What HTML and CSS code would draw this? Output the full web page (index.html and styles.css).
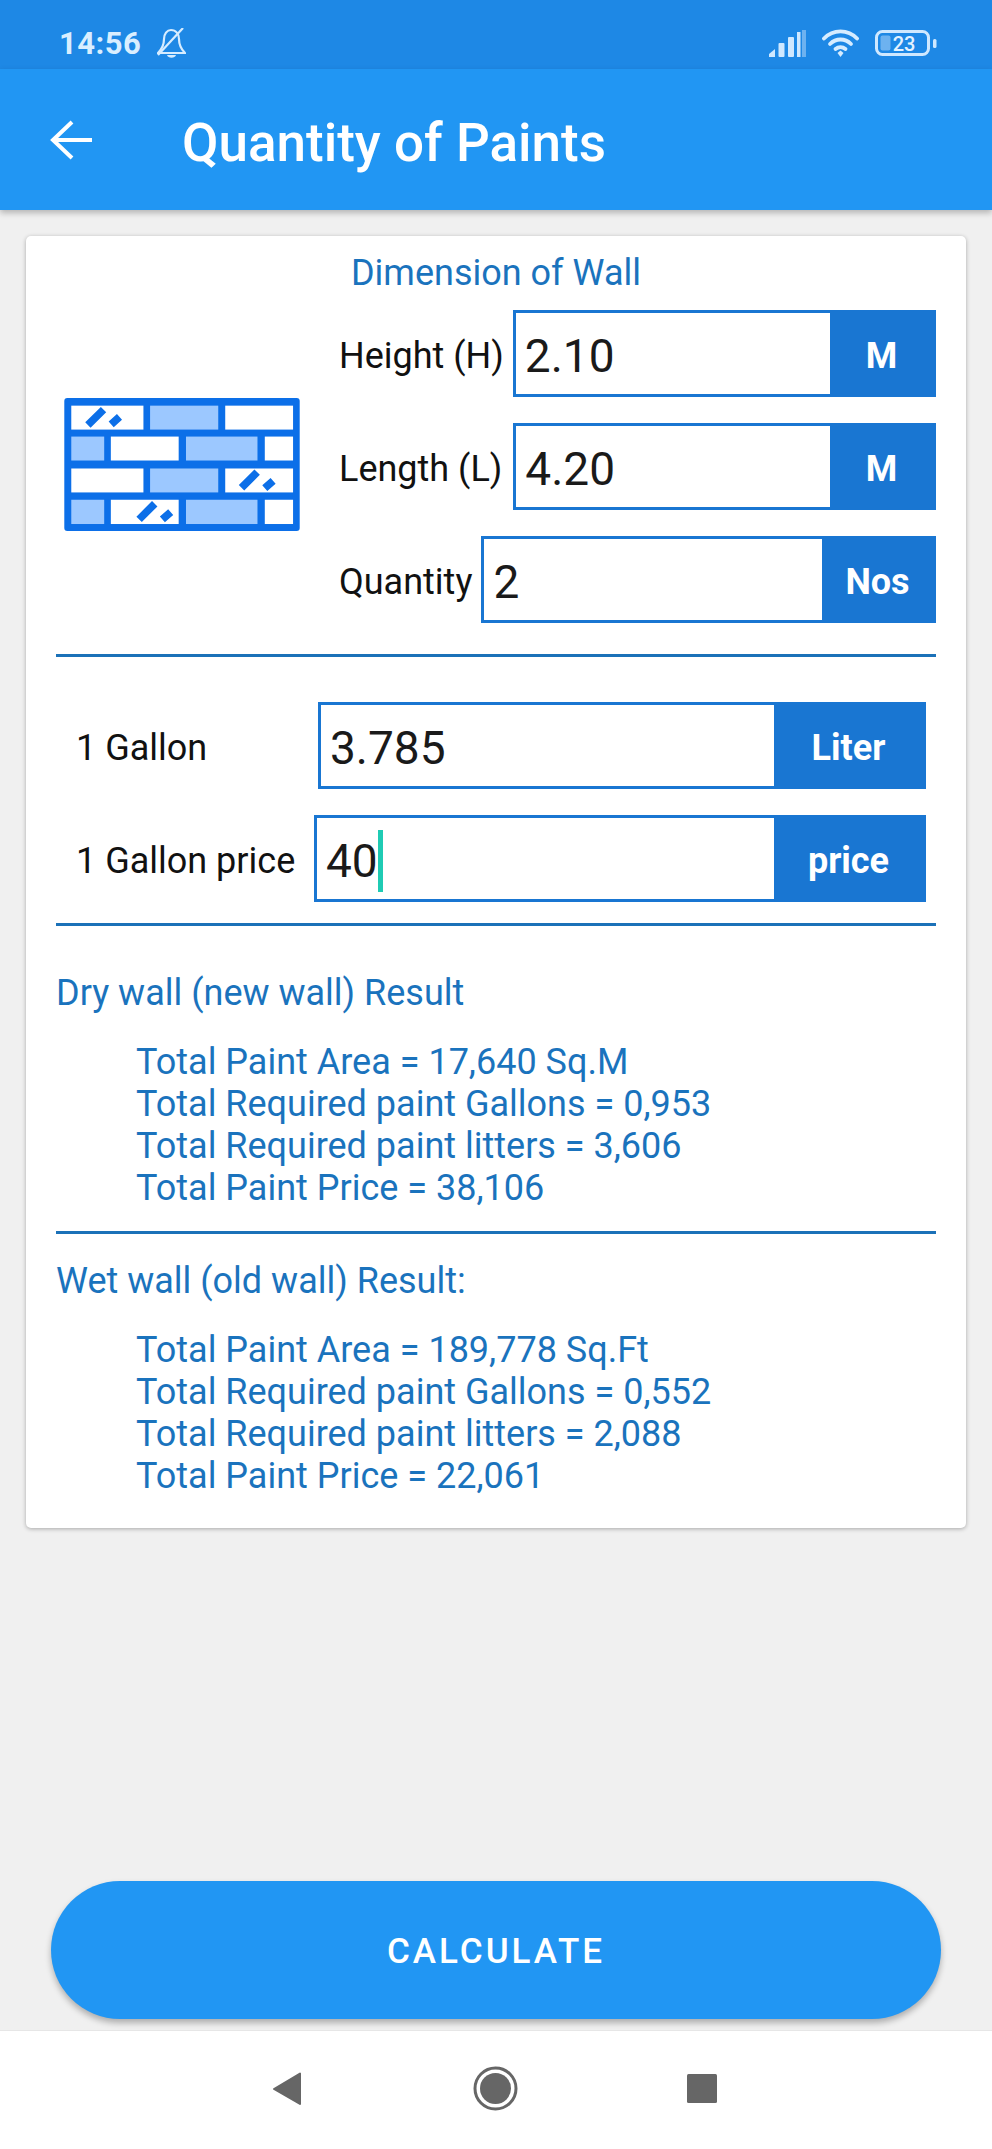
FILE: index.html
```html
<!DOCTYPE html>
<html lang="en">
<head>
<meta charset="utf-8">
<title>Quantity of Paints</title>
<link rel="stylesheet" href="styles.css">
</head>
<body>
<div class="screen">
  <header class="status">
    <div class="status-left">
      <span class="time">14:56</span>
      <svg class="bell" viewBox="0 0 29 30"><path d="M14 2c5 0 8 4 8 9 0 6 2 10 6 14H1c4-4 6-8 6-14 0-5 3-9 7-9z" fill="none" stroke="#d6ecff" stroke-width="2.200"/><path d="M1 27 26 0" stroke="#d6ecff" stroke-width="2.200"/><path d="M10 27h9c-1 3.500-8 3.500-9 0z" fill="#d6ecff"/></svg>
    </div>
    <div class="status-right">
      <svg class="signal" viewBox="0 0 38 27"><path d="M0 27v-3l6-5v8z" fill="#cfe8ff"/><rect x="9.500" y="13" width="6" height="14" rx="1" fill="#cfe8ff"/><rect x="19" y="7" width="6" height="20" rx="1" fill="#cfe8ff"/><rect x="28" y="2" width="3.500" height="25" fill="#cfe8ff"/><rect x="33" y="0" width="4" height="27" fill="#6db2f0"/></svg>
      <svg class="wifi" viewBox="0 0 37 28"><g fill="none" stroke="#d6ecff" stroke-width="3.800" stroke-linecap="round"><path d="M2 9.500c9-9.500 24-9.500 33 0"/><path d="M8 15c6-6 15-6 21 0"/><path d="M13.500 20c3-2.500 7-2.500 10 0"/></g><path d="M15.500 24l3-2.500 3 2.500-3 4z" fill="#d6ecff"/></svg>
      <svg class="battery" viewBox="0 0 62 26"><rect x="1.500" y="1.500" width="52" height="23" rx="6" fill="none" stroke="#cfe8ff" stroke-width="3"/><rect x="5.500" y="5.500" width="10" height="15" rx="2" fill="#6db2f0"/><text x="29" y="20.500" text-anchor="middle" class="bat-text">23</text><rect x="58" y="9" width="3.500" height="9" rx="1.500" fill="#cfe8ff"/></svg>
    </div>
  </header>

  <div class="appbar">
    <svg class="back" viewBox="0 0 42 40"><path d="M22 2 3 20l19 18M3 20h39" fill="none" stroke="#fff" stroke-width="4"/></svg>
    <h1 class="appbar-title">Quantity of Paints</h1>
  </div>

  <main class="content">
    <section class="card">
      <h2 class="card-title">Dimension of Wall</h2>
      <div class="wall">
        <svg class="wall-icon" viewBox="72 52 708 400">
          <rect x="72" y="52" width="708" height="400" rx="9" fill="#0c6fe8"/>
          <g fill="#fff">
            <rect x="93" y="75" width="217" height="72"/><rect x="556" y="75" width="204" height="72"/>
            <rect x="212" y="168" width="204" height="72"/><rect x="675" y="168" width="85" height="72"/>
            <rect x="93" y="264" width="217" height="72"/><rect x="556" y="264" width="204" height="72"/>
            <rect x="212" y="358" width="204" height="73"/><rect x="675" y="358" width="85" height="73"/>
          </g>
          <g fill="#9cc8ff">
            <rect x="330" y="75" width="205" height="72"/>
            <rect x="93" y="168" width="99" height="72"/><rect x="438" y="168" width="215" height="72"/>
            <rect x="330" y="264" width="205" height="72"/>
            <rect x="93" y="358" width="99" height="73"/><rect x="438" y="358" width="215" height="73"/>
          </g>
          <g stroke="#0c6fe8" stroke-width="23" fill="none">
            <path d="M143 133 190 87M213 131l25-22M605 322l47-47M675 323l25-22M297 417l47-47M367 417l25-22"/>
          </g>
        </svg>
        <div class="wall-fields">
          <div class="row row-height"><span class="label">Height (H)</span><div class="field"><span class="value">2.10</span><span class="unit">M</span></div></div>
          <div class="row row-length"><span class="label">Length (L)</span><div class="field"><span class="value">4.20</span><span class="unit">M</span></div></div>
          <div class="row row-qty"><span class="label">Quantity</span><div class="field"><span class="value">2</span><span class="unit unit-nos">Nos</span></div></div>
        </div>
      </div>
      <hr class="rule rule-first">
      <div class="gallon">
        <div class="row"><span class="label label-gallon">1 Gallon</span><div class="field"><span class="value">3.785</span><span class="unit unit-wide">Liter</span></div></div>
        <div class="row"><span class="label label-price">1 Gallon price</span><div class="field"><span class="value">40<i class="caret"></i></span><span class="unit unit-wide">price</span></div></div>
      </div>
      <hr class="rule rule-second">
      <h3 class="res-title res-dry">Dry wall (new wall) Result</h3>
      <ul class="res-list">
        <li>Total Paint Area = 17,640 Sq.M</li>
        <li>Total Required paint Gallons = 0,953</li>
        <li>Total Required paint litters = 3,606</li>
        <li>Total Paint Price = 38,106</li>
      </ul>
      <hr class="rule rule-third">
      <h3 class="res-title res-wet">Wet wall (old wall) Result:</h3>
      <ul class="res-list res-list-last">
        <li>Total Paint Area = 189,778 Sq.Ft</li>
        <li>Total Required paint Gallons = 0,552</li>
        <li>Total Required paint litters = 2,088</li>
        <li>Total Paint Price = 22,061</li>
      </ul>
    </section>
    <button class="calc" type="button">CALCULATE</button>
  </main>

  <nav class="navbar">
    <svg class="nav-back" viewBox="0 0 28 33"><path d="M27 1.500V32L1 17z" fill="#666" stroke="#666" stroke-width="2" stroke-linejoin="round"/></svg>
    <svg class="nav-home" viewBox="0 0 45 45"><circle cx="22.500" cy="22.500" r="20.500" fill="none" stroke="#666" stroke-width="3"/><circle cx="22.500" cy="22.500" r="15.500" fill="#666"/></svg>
    <svg class="nav-recent" viewBox="0 0 30 29"><rect width="30" height="29" rx="1.500" fill="#666"/></svg>
  </nav>
</div>
</body>
</html>
```
FILE: styles.css
```css
* { box-sizing: border-box; }
html, body { margin: 0; padding: 0; }
body { font-family: Roboto, "Liberation Sans", sans-serif; background: #f0f0f0; }
.screen { width: 992px; height: 2149px; display: flex; flex-direction: column; overflow: hidden; }

.status { height: 69px; background: #1e88e5; display: flex; justify-content: space-between; align-items: center; padding: 17px 55px 0 59px; flex: none; }
.status-left { display: flex; align-items: center; gap: 16px; }
.time { font-size: 31px; font-weight: 700; color: #d9eeff; letter-spacing: .5px; }
.bell { width: 29px; height: 30px; }
.status-right { display: flex; align-items: center; }
.signal { width: 38px; height: 27px; margin-right: 15px; }
.wifi { width: 37px; height: 28px; margin-right: 16px; }
.battery { width: 62px; height: 26px; }
.bat-text { font: 500 20px Roboto, sans-serif; fill: #e3f2ff; }

.appbar { height: 141px; background: #2196f3; display: flex; align-items: center; padding: 0 0 0 50px; box-shadow: 0 3px 6px rgba(0,0,0,.25); flex: none; position: relative; }
.back { width: 42px; height: 40px; margin-right: 90px; }
.appbar-title { margin: 6px 0 0; font-size: 53px; font-weight: 500; color: #fff; }

.content { flex: 1; display: flex; flex-direction: column; padding: 26px 26px 11px; min-height: 0; }
.card { background: #fff; border-radius: 5px; box-shadow: 0 1px 4px rgba(0,0,0,.3); padding: 17px 30px 32px; height: 1292px; }
.card-title { margin: 0 0 17px; text-align: center; font-size: 36px; line-height: 40px; font-weight: 400; color: #1a73bd; }

.wall { display: flex; align-items: center; }
.wall-icon { width: 236px; height: 133px; margin: 0 39px 5px 8px; flex: none; }
.wall-fields { flex: 1; display: flex; flex-direction: column; gap: 26px; }
.row { display: flex; align-items: center; gap: 12px; }
.row-height { gap: 9px; }
.row-length { gap: 11px; }
.row-qty { gap: 9px; }
.label { font-size: 36px; color: #111; white-space: nowrap; padding-top: 4px; }
.field { flex: 1; height: 87px; border: 3px solid #1976d2; display: flex; align-items: stretch; }
.value { flex: 1; font-size: 46px; color: #1a1a1a; padding: 4px 0 0 9px; display: flex; align-items: center; }
.unit { width: 103px; background: #1976d2; color: #fff; font-size: 36px; font-weight: 700; padding-top: 5px; display: flex; align-items: center; justify-content: center; }
.unit-nos { width: 111px; }
.unit-wide { width: 149px; }

.rule { border: 0; height: 3px; background: #1b71b8; margin: 0; }
.rule-first { margin-top: 31px; }
.gallon { margin: 45px 10px 0 20px; display: flex; flex-direction: column; gap: 26px; }
.label-gallon { width: 230px; }
.label-price { width: 226px; }
.rule-second { margin-top: 21px; }

.res-title { margin: 46px 0 0; font-size: 36px; line-height: 42px; font-weight: 400; color: #1a73bd; }
.res-list { list-style: none; margin: 27px 0 22px; padding: 0 0 0 80px; font-size: 36px; line-height: 42px; color: #1a73bd; }
.res-wet { margin-top: 26px; }
.res-list-last { margin: 27px 0 0; }

.calc { margin: auto 25px 0; height: 138px; border: 0; border-radius: 69px; background: #2196f3; color: #fff; font: 500 35px Roboto, sans-serif; letter-spacing: 3px; padding-top: 4px; box-shadow: 0 4px 6px rgba(0,0,0,.28); flex: none; }

.navbar { height: 119px; background: #fff; border-top: 1px solid #e6e6e6; flex: none; display: flex; align-items: center; padding: 0 0 3px 273px; }
.nav-back { width: 28px; height: 33px; margin-right: 172px; }
.nav-home { width: 45px; height: 45px; margin-right: 169px; }
.nav-recent { width: 30px; height: 29px; }
.caret { display: inline-block; width: 5px; height: 62px; background: #1fcbb4; }
```
